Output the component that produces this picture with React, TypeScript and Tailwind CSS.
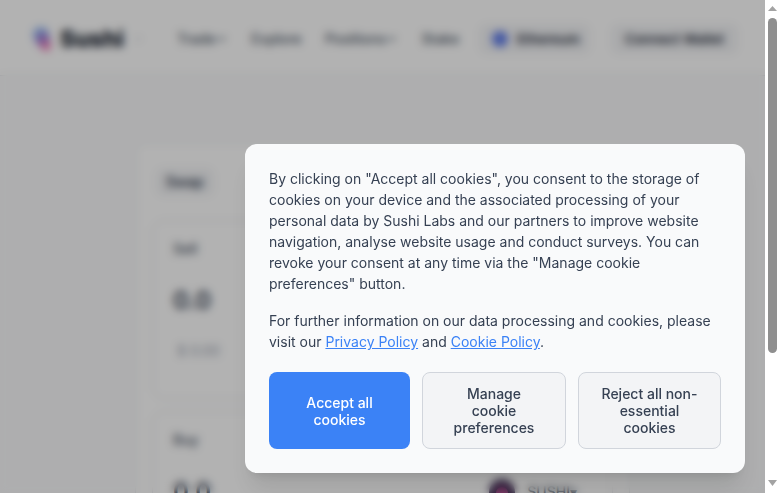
import { ChevronDown } from "lucide-react";

const navItems = [
  { label: "Trade", caret: true },
  { label: "Explore", caret: false },
  { label: "Positions", caret: true },
  { label: "Stake", caret: false },
];

function SushiLogo() {
  return (
    <svg width="24" height="26" viewBox="0 0 24 26" className="shrink-0 opacity-80">
      <circle cx="11" cy="9" r="8" fill="#7aa7f0" />
      <circle cx="13" cy="14" r="7" fill="#8a5cc9" />
      <circle cx="16" cy="20" r="5" fill="#ec5fa8" />
    </svg>
  );
}

function Header() {
  return (
    <header className="flex h-[76px] items-center border-b border-gray-200 bg-white pl-[30px] pr-[27px] pt-[3px]">
      <SushiLogo />
      <span className="ml-1.5 text-[23px] font-extrabold text-gray-900">Sushi</span>
      <ChevronDown className="ml-2 h-3 w-3 text-gray-400" />
      <nav className="ml-[33px] flex items-center gap-[23.5px]">
        {navItems.map((item) => (
          <span key={item.label} className="flex items-center text-sm font-medium text-gray-600">
            {item.label}
            {item.caret && <ChevronDown className="h-3 w-3" strokeWidth={3} />}
          </span>
        ))}
      </nav>
      <div className="ml-auto flex items-center gap-[21px]">
        <div className="flex h-[30px] items-center gap-[9px] rounded-lg bg-gray-100 pl-[13px] pr-2.5">
          <span className="h-4 w-4 rounded-full bg-[#627eea]" />
          <span className="text-[13.5px] font-semibold text-gray-800">Ethereum</span>
        </div>
        <div className="flex h-[30px] items-center rounded-lg bg-gray-100 px-3.5 text-[13.5px] font-semibold text-gray-800">
          Connect Wallet
        </div>
      </div>
    </header>
  );
}

function TokenPanel({ label, showUsd, token }: { label: string; showUsd?: boolean; token?: boolean }) {
  return (
    <div className="flex h-[179px] flex-col rounded-xl border border-gray-200 bg-white px-5 pt-[18px]">
      <span className="text-sm font-medium text-gray-600">{label}</span>
      <div className="mt-[26px] flex items-center justify-between">
        <span className="text-2xl font-semibold text-gray-700">0.0</span>
        {token && (
          <div className="mr-[15px] flex items-center gap-3">
            <svg width="26" height="26" viewBox="0 0 26 26" className="shrink-0">
              <circle cx="13" cy="13" r="13" fill="#3f2f55" />
              <circle cx="13" cy="14" r="6" fill="#c2569a" />
            </svg>
            <span className="text-sm font-medium text-gray-600">SUSHI▾</span>
          </div>
        )}
      </div>
      {showUsd && <span className="mt-6 pl-1 text-sm text-gray-400">$ 0.00</span>}
    </div>
  );
}

function SwapCard() {
  return (
    <section className="mx-auto mt-[66px] w-[495px] rounded-xl border border-gray-200 bg-white px-4 pt-[25px]">
      <span className="ml-1 inline-block rounded-lg bg-gray-100 px-2.5 py-1 text-sm font-semibold text-gray-700">
        Swap
      </span>
      <div className="mt-6 flex flex-col gap-3">
        <TokenPanel label="Sell" showUsd />
        <TokenPanel label="Buy" token />
      </div>
    </section>
  );
}

function CookieDialog() {
  return (
    <div className="absolute inset-0 flex items-end justify-end bg-black/30 pb-5 pr-5 backdrop-blur-[4px]">
      <div className="w-[500px] rounded-xl bg-gray-50 p-6 text-sm leading-[21px] text-gray-700 shadow-xl">
        <p>
          By clicking on "Accept all cookies", you consent to the storage of cookies on your device and the
          associated processing of your personal data by Sushi Labs and our partners to improve website
          navigation, analyse website usage and conduct surveys. You can revoke your consent at any time via
          the "Manage cookie preferences" button.
        </p>
        <p className="mt-4">
          For further information on our data processing and cookies, please visit our{" "}
          <a className="text-[#3b82f6] underline">Privacy Policy</a> and{" "}
          <a className="text-[#3b82f6] underline">Cookie Policy</a>.
        </p>
        <div className="mt-5 flex gap-3 leading-[17px] font-medium">
          <button className="h-[77px] w-[141px] rounded-lg bg-[#3b82f6] px-[22px] text-white">
            Accept all cookies
          </button>
          <button className="h-[77px] w-[144px] rounded-lg border border-gray-300 bg-gray-100 px-[22px]">
            Manage cookie preferences
          </button>
          <button className="h-[77px] w-[143px] rounded-lg border border-gray-300 bg-gray-100 px-[22px]">
            Reject all non-essential cookies
          </button>
        </div>
      </div>
    </div>
  );
}

function Scrollbar() {
  return (
    <div className="flex w-[15px] shrink-0 flex-col items-center bg-white">
      <svg width="15" height="17" viewBox="0 0 15 17" className="shrink-0">
        <path d="M3 11 L7.5 6 L12 11 Z" fill="#a3a3a3" />
      </svg>
      <div className="mt-px h-[335px] w-[9px] rounded-full bg-[#8f8f8f]" />
      <svg width="15" height="17" viewBox="0 0 15 17" className="mt-auto shrink-0">
        <path d="M3 4 L7.5 10 L12 4 Z" fill="#a3a3a3" />
      </svg>
    </div>
  );
}

export default function App() {
  return (
    <div className="flex h-[493px] overflow-hidden font-['Inter',sans-serif]">
      <div className="relative min-w-0 flex-1 overflow-hidden bg-gray-50">
        <Header />
        <SwapCard />
        <CookieDialog />
      </div>
      <Scrollbar />
    </div>
  );
}
